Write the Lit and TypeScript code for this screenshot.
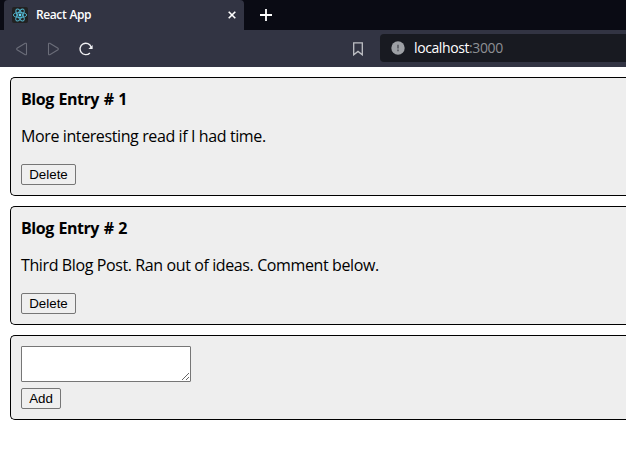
import { LitElement, html, css, svg } from "lit";
import { customElement, property } from "lit/decorators.js";

@customElement("browser-chrome")
class BrowserChrome extends LitElement {
  static styles = css`
    :host { display: block; height: 67px; background: #323443; font-family: "Open Sans", sans-serif; }
    svg { display: block; flex: none; }
    .tabs { display: flex; height: 30px; background: #0a0b14; padding-left: 4px; box-sizing: border-box; }
    .tab { display: flex; align-items: center; width: 240px; box-sizing: border-box; padding: 0 7px 0 8px; background: #323443; border-radius: 4px 4px 0 0; color: #fff; }
    .title { margin-left: 8px; flex: 1; font-size: 12px; font-weight: 600; line-height: 30px; letter-spacing: -0.4px; word-spacing: 0.5px; }
    .new { margin: 9px 0 0 16px; }
    .bar { display: flex; align-items: center; height: 37px; }
    .back { margin-left: 15px; }
    .forward { margin-left: 19px; }
    .reload { margin-left: 19px; }
    .bookmark { margin-left: 259px; }
    .address { display: flex; align-items: center; flex: 1; height: 28px; margin: 0 0 1px 16px; padding-left: 11px; background: #181a21; border-radius: 4px 0 0 4px; color: #fff; font-size: 14px; line-height: 28px; letter-spacing: -0.4px; }
    .url { margin-left: 9px; }
    .port { color: #8d8f94; }
  `;
  render() {
    return html`
      <div class="tabs">
        <div class="tab">
          <svg width="16" height="16" viewBox="0 0 16 16">
            <rect width="16" height="16" rx="2" fill="#222"></rect>
            <g fill="none" stroke="#53b7d0" stroke-width=".9">
              ${[0, 60, 120].map((a) => svg`<ellipse cx="8" cy="8" rx="6.7" ry="2.6" transform="rotate(${a} 8 8)"></ellipse>`)}
            </g>
            <circle cx="8" cy="8" r="1.4" fill="#61dafb"></circle>
          </svg>
          <span class="title">React App</span>
          <svg width="10" height="10" viewBox="0 0 10 10"><path d="M1.7 1.7 8.3 8.3M8.3 1.7 1.7 8.3" stroke="#fff" stroke-width="1.6"></path></svg>
        </div>
        <svg class="new" width="12" height="12" viewBox="0 0 12 12"><path d="M6 0V12M0 6H12" stroke="#fff" stroke-width="1.8"></path></svg>
      </div>
      <div class="bar">
        <svg class="back" width="13" height="14" viewBox="0 0 13 14"><path d="M10.2 1.3 2 6.3Q1.2 7 2 7.7L10.2 12.7Q11.5 13 11.5 12V2Q11.5 1 10.2 1.3Z" fill="none" stroke="#6b6d79" stroke-width="1.1"></path></svg>
        <svg class="forward" width="13" height="14" viewBox="0 0 13 14"><path d="M2.8 1.3 11 6.3Q11.8 7 11 7.7L2.8 12.7Q1.5 13 1.5 12V2Q1.5 1 2.8 1.3Z" fill="none" stroke="#6b6d79" stroke-width="1.1"></path></svg>
        <svg class="reload" width="14" height="14" viewBox="0 0 14 14"><path d="M10.9 10.9A5.7 5.7 0 1 1 12.2 5.2" fill="none" stroke="#f0f0f2" stroke-width="1.4"></path><path d="M13.6 3V7H9.4Z" fill="#f0f0f2"></path></svg>
        <svg class="bookmark" width="12" height="14" viewBox="0 0 12 14"><path d="M1.7.8H10.3V12.8L6 9.4 1.7 12.8Z" fill="none" stroke="#bfc0c5" stroke-width="1.3"></path></svg>
        <div class="address">
          <svg width="14" height="14" viewBox="0 0 14 14"><circle cx="7" cy="7" r="6.7" fill="#9da0a5"></circle><path d="M7 3.8V7.5M7 8.5V10.2" stroke="#555860" stroke-width="1.6"></path></svg>
          <span class="url">localhost<span class="port">:3000</span></span>
        </div>
      </div>`;
  }
}

@customElement("app-root")
class AppRoot extends LitElement {
  static styles = css`
    :host { display: block; height: 449px; overflow: hidden; background: #fff; color: #000; font-family: "Open Sans", sans-serif; }
    .list { display: grid; gap: 10px; padding: 10px 0 0 10px; }
    .card { box-sizing: border-box; height: 119px; padding: 10px; background: #eee; border: 1px solid #000; border-right: 0; border-radius: 5px 0 0 5px; }
    .form { height: 85px; }
    .heading { margin: 0; font-size: 16px; line-height: 22px; font-weight: 700; letter-spacing: -0.45px; word-spacing: 1px; }
    .text { margin: 15px 0 17px; font-size: 16px; line-height: 22px; letter-spacing: -0.39px; white-space: nowrap; }
    button { display: block; box-sizing: border-box; height: 21px; padding: 0; border: 1px solid #767676; border-radius: 2px; background: #efefef; color: #000; font: 13.333px/19px "Liberation Sans", Arial, sans-serif; }
    .delete { width: 55px; }
    .add { width: 40px; margin-top: 6px; }
    textarea { display: block; box-sizing: border-box; width: 170px; height: 36px; margin: 0; padding: 2px; border: 1px solid #767676; border-radius: 1px; background: #fff; resize: both; overflow: auto; }
  `;
  @property({ attribute: false }) posts = [
    { title: "Blog Entry # 1", text: "More interesting read if I had time." },
    { title: "Blog Entry # 2", text: "Third Blog Post. Ran out of ideas. Comment below." },
  ];
  render() {
    return html`
      <browser-chrome></browser-chrome>
      <main class="list">
        ${this.posts.map((p) => html`
          <section class="card">
            <h4 class="heading">${p.title}</h4>
            <p class="text">${p.text}</p>
            <button class="delete">Delete</button>
          </section>`)}
        <section class="card form">
          <textarea></textarea>
          <button class="add">Add</button>
        </section>
      </main>`;
  }
}
